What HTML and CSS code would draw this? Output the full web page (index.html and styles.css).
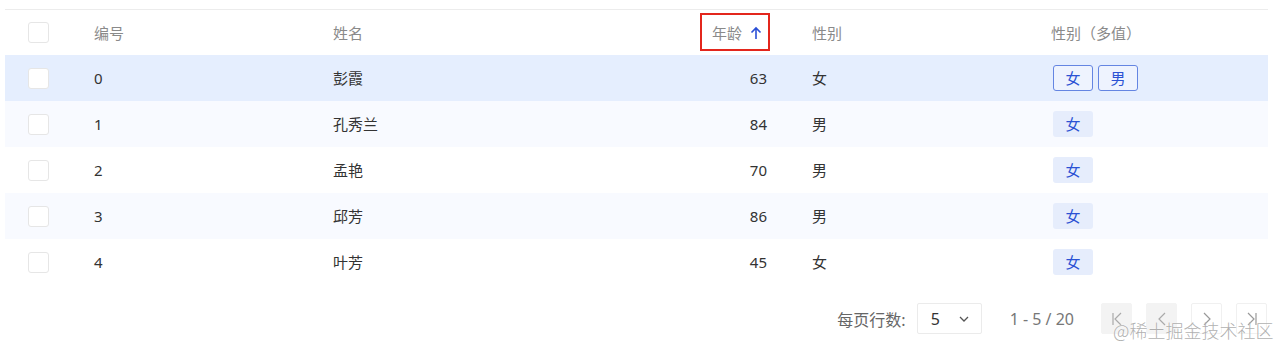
FILE: index.html
```html
<!DOCTYPE html>
<html lang="zh">
<head>
<meta charset="utf-8">
<link rel="stylesheet" href="styles.css">
</head>
<body>
<div class="page">
  <div class="table">
    <div class="row head">
      <div class="cell c-check"><span class="checkbox"></span></div>
      <div class="cell">编号</div>
      <div class="cell">姓名</div>
      <div class="cell c-num"><span class="sort-label">年龄 <svg class="arrow" width="12" height="14" viewBox="0 0 12 14"><path d="M6 13V2M1.5 6.5L6 2l4.5 4.5" fill="none" stroke="#2a4fd6" stroke-width="1.6"/></svg></span></div>
      <div class="cell c-sex">性别</div>
      <div class="cell">性别（多值）</div>
    </div>
    <div class="row selected">
      <div class="cell c-check"><span class="checkbox"></span></div>
      <div class="cell">0</div>
      <div class="cell">彭霞</div>
      <div class="cell c-num">63</div>
      <div class="cell c-sex">女</div>
      <div class="cell tags"><span class="tag outline">女</span><span class="tag outline">男</span></div>
    </div>
    <div class="row alt">
      <div class="cell c-check"><span class="checkbox"></span></div>
      <div class="cell">1</div>
      <div class="cell">孔秀兰</div>
      <div class="cell c-num">84</div>
      <div class="cell c-sex">男</div>
      <div class="cell tags"><span class="tag">女</span></div>
    </div>
    <div class="row">
      <div class="cell c-check"><span class="checkbox"></span></div>
      <div class="cell">2</div>
      <div class="cell">孟艳</div>
      <div class="cell c-num">70</div>
      <div class="cell c-sex">男</div>
      <div class="cell tags"><span class="tag">女</span></div>
    </div>
    <div class="row alt">
      <div class="cell c-check"><span class="checkbox"></span></div>
      <div class="cell">3</div>
      <div class="cell">邱芳</div>
      <div class="cell c-num">86</div>
      <div class="cell c-sex">男</div>
      <div class="cell tags"><span class="tag">女</span></div>
    </div>
    <div class="row">
      <div class="cell c-check"><span class="checkbox"></span></div>
      <div class="cell">4</div>
      <div class="cell">叶芳</div>
      <div class="cell c-num">45</div>
      <div class="cell c-sex">女</div>
      <div class="cell tags"><span class="tag">女</span></div>
    </div>
  </div>
  <div class="pager">
    <span class="pager-label">每页行数:</span>
    <div class="select"><span>5</span><svg width="10" height="6" viewBox="0 0 10 6"><path d="M1 1l4 4 4-4" fill="none" stroke="#555" stroke-width="1.3"/></svg></div>
    <span class="range">1 - 5 / 20</span>
    <div class="btns">
      <span class="pbtn disabled"><svg width="12" height="14" viewBox="0 0 12 14"><path d="M2 1v12M10 1L4 7l6 6" fill="none" stroke="#aaa" stroke-width="1.2"/></svg></span>
      <span class="pbtn disabled"><svg width="12" height="14" viewBox="0 0 12 14"><path d="M9 1L3 7l6 6" fill="none" stroke="#aaa" stroke-width="1.2"/></svg></span>
      <span class="pbtn"><svg width="12" height="14" viewBox="0 0 12 14"><path d="M3 1l6 6-6 6" fill="none" stroke="#999" stroke-width="1.2"/></svg></span>
      <span class="pbtn"><svg width="12" height="14" viewBox="0 0 12 14"><path d="M10 1v12M2 1l6 6-6 6" fill="none" stroke="#999" stroke-width="1.2"/></svg></span>
    </div>
  </div>
  <div class="watermark">@稀土掘金技术社区</div>
</div>
</body>
</html>
```
FILE: styles.css
```css
* { box-sizing: border-box; }
html, body { margin: 0; padding: 0; background: #fff; }
body {
  font-family: "Noto Sans", "Noto Sans CJK SC", sans-serif;
  font-size: 15px;
  color: #333;
}
.page {
  position: relative;
  width: 1280px;
  height: 347px;
  padding: 9px 12px 0 5px;
}
.table {
  border-top: 1px solid #ececec;
}
.row {
  display: grid;
  grid-template-columns: 89px 239px 267px 189px 262px 1fr;
  height: 46px;
  align-items: center;
}
.row.head { height: 45px; color: #8a8a8a; }
.row.selected { background: #e5eefe; }
.row.alt { background: #f8faff; }
.cell { white-space: nowrap; line-height: 20px; }
.c-check { padding-left: 23px; display: flex; align-items: center; }
.checkbox {
  display: block;
  width: 21px;
  height: 21px;
  border: 1px solid #e6e6e6;
  border-radius: 3px;
  background: #fff;
}
.c-num { text-align: right; padding-right: 22px; }
.c-sex { padding-left: 23px; }
.sort-label {
  position: relative;
  display: inline-flex;
  align-items: center;
  gap: 8px;
  margin-right: 5px;
}
.sort-label::after {
  content: "";
  position: absolute;
  left: -12px;
  right: -8px;
  top: -10px;
  bottom: -8px;
  border: 2px solid #e3261c;
}
.arrow { display: block; }
.tags { display: flex; gap: 5px; padding-left: 2px; }
.tag {
  display: inline-flex;
  align-items: center;
  justify-content: center;
  width: 40px;
  height: 26px;
  border-radius: 3px;
  background: #e6edfc;
  color: #2b52d4;
}
.tag.outline {
  width: 40px;
  border: 1px solid #6485e2;
  background: #eef3fe;
}
.pager {
  display: flex;
  justify-content: flex-end;
  align-items: center;
  margin-top: 18px;
  padding-right: 1px;
  color: #666;
  font-size: 16px;
}
.pager-label { margin-right: 11px; }
.select {
  display: flex;
  align-items: center;
  width: 65px;
  height: 31px;
  border: 1px solid #ebebeb;
  border-radius: 2px;
  padding-left: 13px;
  color: #333;
  font-size: 16px;
}
.select svg { margin-left: 19px; }
.range { margin-left: 28px; margin-right: 27px; color: #777; }
.btns { display: flex; gap: 14px; }
.pbtn {
  display: flex;
  align-items: center;
  justify-content: center;
  width: 31px;
  height: 31px;
  border: 1px solid #f0f0f0;
  border-radius: 2px;
  background: #fff;
}
.pbtn.disabled { background: #f3f3f3; border-color: #f3f3f3; }
.watermark {
  position: absolute;
  left: 1113px;
  top: 317px;
  font-family: "Noto Sans CJK SC", sans-serif;
  font-weight: 300;
  font-size: 18px;
  color: rgba(150, 150, 150, 0.75);
  text-shadow: 0 0 2px #fff;
  white-space: nowrap;
}
```
